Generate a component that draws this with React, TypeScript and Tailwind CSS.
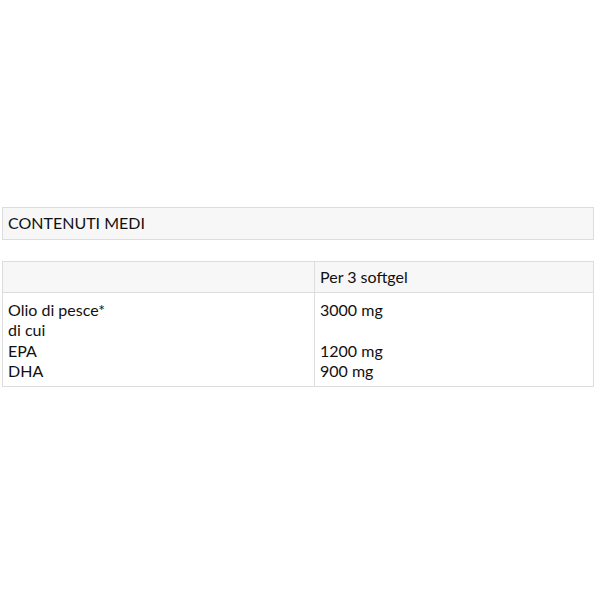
const rows = [
  { label: "Olio di pesce*", value: "3000 mg" },
  { label: "di cui", value: "" },
  { label: "EPA", value: "1200 mg" },
  { label: "DHA", value: "900 mg" },
];

export default function App() {
  return (
    <div
      className="h-[600px] w-[600px] bg-white pt-[207px] pl-[2px] text-[16px] leading-[20.4px] text-[#111]"
      style={{ fontFamily: "Lato, 'Noto Sans', sans-serif" }}
    >
      {/* intestazione */}
      <div className="w-[592px] h-[33px] border border-[#dddddd] bg-[#f7f7f7] px-[5px] flex items-center">
        CONTENUTI MEDI
      </div>

      {/* tabella valori */}
      <div className="mt-[21px] w-[592px] border border-[#dddddd] grid grid-cols-[312px_1fr]">
        <div className="h-[31px] bg-[#f7f7f7] border-r border-b border-[#dddddd]" />
        <div className="h-[31px] bg-[#f7f7f7] border-b border-[#dddddd] px-[5px] flex items-center">
          Per 3 softgel
        </div>
        <div className="border-r border-[#dddddd] px-[5px] pt-[7px] pb-[4px]">
          {rows.map((r) => (
            <div key={r.label}>{r.label}</div>
          ))}
        </div>
        <div className="px-[5px] pt-[7px] pb-[4px]">
          {rows.map((r) => (
            <div key={r.label} className="h-[20.4px]">
              {r.value}
            </div>
          ))}
        </div>
      </div>
    </div>
  );
}
